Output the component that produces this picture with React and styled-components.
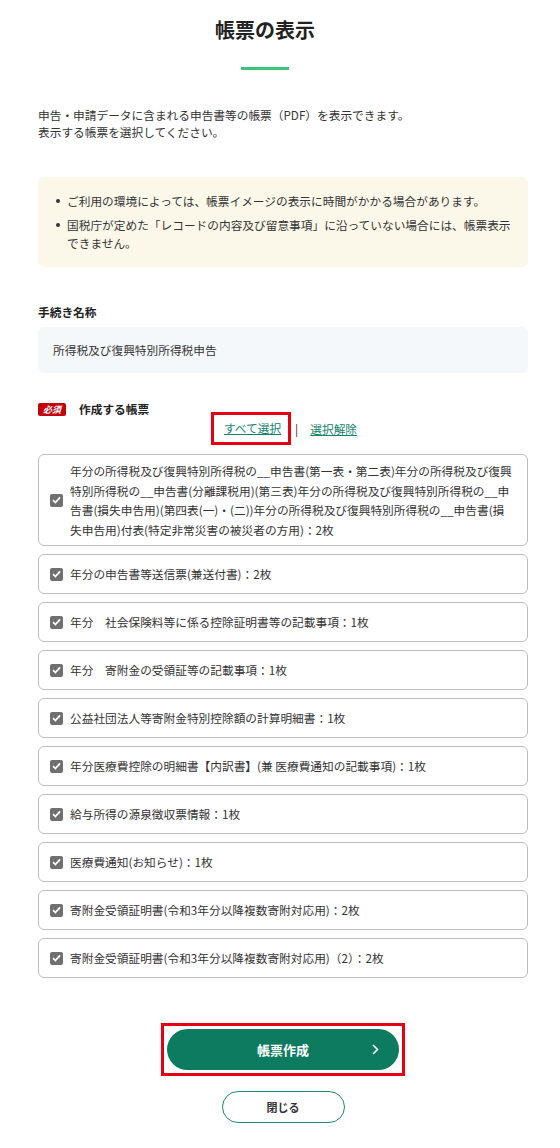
import React from "react";
import styled, { createGlobalStyle } from "styled-components";

const Global = createGlobalStyle`
  html, body { margin: 0; padding: 0; background: #fff; }
  body {
    font-family: "Noto Sans CJK JP", "Noto Sans", sans-serif;
    color: #333;
    font-size: 11.7px;
  }
`;

const Page = styled.div`
  width: 560px;
  min-height: 1148px;
  box-sizing: border-box;
  padding: 16px 32px 24px 38px;
  display: flex;
  flex-direction: column;
`;

const Header = styled.header`
  margin: 0 -2px 0 -38px;
  display: flex;
  flex-direction: column;
  align-items: center;
`;

const Title = styled.h1`
  margin: 0;
  font-size: 20px;
  line-height: 28px;
  font-weight: 700;
  color: #222;
`;

const Accent = styled.div`
  width: 48px;
  height: 3px;
  background: #3cc47c;
  margin-top: 23px;
`;

const Lead = styled.p`
  margin: 36px 0 0;
  font-size: 11.7px;
  line-height: 17px;
`;

const Notice = styled.ul`
  margin: 37px 0 0;
  padding: 15px 12px 15px 29px;
  list-style: none;
  background: #fbf8ea;
  border-radius: 6px;
`;

const NoticeItem = styled.li`
  position: relative;
  font-size: 11.7px;
  line-height: 18px;
  & + & { margin-top: 6px; }
  &::before {
    content: "";
    position: absolute;
    left: -11px;
    top: 7px;
    width: 4px;
    height: 4px;
    border-radius: 50%;
    background: #333;
  }
`;

const FieldLabel = styled.div`
  margin-top: 36px;
  font-size: 11.7px;
  line-height: 18px;
  font-weight: 700;
  color: #222;
`;

const ReadOnly = styled.div`
  margin-top: 6px;
  padding: 14px 15px;
  background: #f5f8fa;
  border-radius: 6px;
  font-size: 11.7px;
  line-height: 18px;
`;

const Heading = styled.div`
  margin-top: 27px;
  display: flex;
  align-items: center;
  gap: 13px;
`;

const Required = styled.span`
  display: inline-block;
  background: #c4000b;
  color: #fff;
  font-size: 9px;
  line-height: 13px;
  font-weight: 700;
  font-style: italic;
  padding: 0 5px;
  border-radius: 2px;
`;

const HeadingText = styled.span`
  font-size: 11.7px;
  line-height: 18px;
  font-weight: 700;
  color: #222;
`;

const LinkRow = styled.div`
  display: flex;
  justify-content: center;
  align-items: center;
  margin: -6px 0 0 2px;
`;

const Marked = styled.span`
  display: inline-flex;
  padding: 4px 7px 5px 10px;
  border: 3px solid #e60012;
`;

const TextLink = styled.a`
  color: #11846a;
  text-decoration: underline;
  font-size: 11.7px;
  line-height: 18px;
  cursor: pointer;
`;

const Sep = styled.span`
  color: #222;
  font-size: 11.7px;
  margin: 0 12px 0 4px;
`;

const List = styled.div`
  margin-top: 9px;
  display: flex;
  flex-direction: column;
  gap: 8px;
`;

const Item = styled.label`
  display: flex;
  align-items: center;
  gap: 7px;
  min-height: 40px;
  box-sizing: border-box;
  padding: 6px 12px 6px 11px;
  border: 1px solid #bdbdbd;
  border-radius: 6px;
  font-size: 11.7px;
  line-height: 19.5px;
`;

const Check = styled.span`
  flex: none;
  width: 13px;
  height: 13px;
  border-radius: 2px;
  background: #707070;
  display: flex;
  align-items: center;
  justify-content: center;
`;

const ItemText = styled.span`
  flex: 1;
`;

const Actions = styled.div`
  margin-top: 45px;
  display: flex;
  flex-direction: column;
  align-items: center;
  gap: 15px;
`;

const PrimaryFrame = styled.div`
  padding: 3px;
  border: 3px solid #e60012;
`;

const Primary = styled.button`
  position: relative;
  width: 232px;
  height: 41px;
  border: none;
  border-radius: 21px;
  background: #0c7b5f;
  color: #fff;
  font-family: inherit;
  font-size: 13px;
  font-weight: 700;
  cursor: pointer;
  display: block;
`;

const Chevron = styled.svg`
  position: absolute;
  right: 20px;
  top: 15px;
`;

const Secondary = styled.button`
  width: 123px;
  height: 32px;
  border: 1px solid #1f8a6e;
  border-radius: 16px;
  background: #fff;
  color: #333;
  font-family: inherit;
  font-size: 11px;
  font-weight: 700;
  cursor: pointer;
`;

const items = [
  "年分の所得税及び復興特別所得税の__申告書(第一表・第二表)年分の所得税及び復興特別所得税の__申告書(分離課税用)(第三表)年分の所得税及び復興特別所得税の__申告書(損失申告用)(第四表(一)・(二))年分の所得税及び復興特別所得税の__申告書(損失申告用)付表(特定非常災害の被災者の方用)：2枚",
  "年分の申告書等送信票(兼送付書)：2枚",
  "年分　社会保険料等に係る控除証明書等の記載事項：1枚",
  "年分　寄附金の受領証等の記載事項：1枚",
  "公益社団法人等寄附金特別控除額の計算明細書：1枚",
  "年分医療費控除の明細書【内訳書】(兼 医療費通知の記載事項)：1枚",
  "給与所得の源泉徴収票情報：1枚",
  "医療費通知(お知らせ)：1枚",
  "寄附金受領証明書(令和3年分以降複数寄附対応用)：2枚",
  "寄附金受領証明書(令和3年分以降複数寄附対応用)（2）：2枚",
];

const CheckMark = () => (
  <Check>
    <svg width="9" height="8" viewBox="0 0 9 8">
      <path d="M1 4.2 L3.4 6.5 L8 1.4" fill="none" stroke="#fff" strokeWidth="1.7" />
    </svg>
  </Check>
);

export default function App() {
  return (
    <>
      <Global />
      <Page>
        <Header>
          <Title>帳票の表示</Title>
          <Accent />
        </Header>
        <Lead>
          申告・申請データに含まれる申告書等の帳票（PDF）を表示できます。
          <br />
          表示する帳票を選択してください。
        </Lead>
        <Notice>
          <NoticeItem>ご利用の環境によっては、帳票イメージの表示に時間がかかる場合があります。</NoticeItem>
          <NoticeItem>国税庁が定めた「レコードの内容及び留意事項」に沿っていない場合には、帳票表示できません。</NoticeItem>
        </Notice>
        <FieldLabel>手続き名称</FieldLabel>
        <ReadOnly>所得税及び復興特別所得税申告</ReadOnly>
        <Heading>
          <Required>必須</Required>
          <HeadingText>作成する帳票</HeadingText>
        </Heading>
        <LinkRow>
          <Marked>
            <TextLink>すべて選択</TextLink>
          </Marked>
          <Sep>|</Sep>
          <TextLink>選択解除</TextLink>
        </LinkRow>
        <List>
          {items.map((t, i) => (
            <Item key={i}>
              <CheckMark />
              <ItemText>{t}</ItemText>
            </Item>
          ))}
        </List>
        <Actions>
          <PrimaryFrame>
            <Primary>
              帳票作成
              <Chevron width="7" height="11" viewBox="0 0 7 11">
                <path d="M1 1 L5.5 5.5 L1 10" fill="none" stroke="#fff" strokeWidth="1.6" />
              </Chevron>
            </Primary>
          </PrimaryFrame>
          <Secondary>閉じる</Secondary>
        </Actions>
      </Page>
    </>
  );
}
